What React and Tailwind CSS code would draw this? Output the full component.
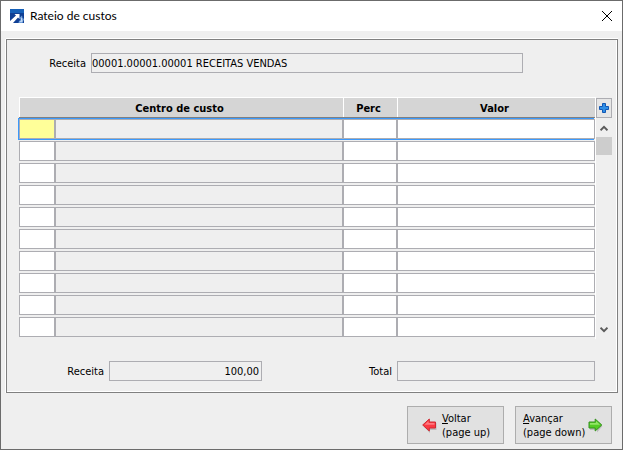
import { useState } from 'react';

const emptyRows = Array.from({ length: 10 }, () => ({ codigo: '', centro: '', perc: '', valor: '' }));

function AppIcon() {
  return (
    <svg width="14" height="14" viewBox="0 0 14 14" aria-hidden="true">
      <rect width="14" height="14" fill="#0f3f94" />
      <rect width="14" height="4" fill="#1560b8" />
      <path d="M0 14V12L6 6.500L4.500 5H9.500V10L8 8.500L3 14Z" fill="#fff" />
      <path d="M8.500 14L9 12L10.500 11L10 8.500L12 6.500L12.500 9L14 10L12.500 14Z" fill="#6f9fdb" />
      <path d="M9.500 13L11 11.500L11 9.500L12 8.500V11L13 12L11.500 13Z" fill="#c4daf5" />
    </svg>
  );
}

function ArrowLeft() {
  return (
    <svg width="15" height="15" viewBox="0 0 15 15" className="shrink-0" aria-hidden="true">
      <path d="M2 9L8 15V12H14.500V5Z" fill="#999" opacity=".5" />
      <path d="M.7 7L7.300 1V4H13.500V10H7.300V13Z" fill="#fb3a44" stroke="#cf2a32" strokeLinejoin="round" />
      <path d="M2.500 6.700L6.500 3V5H12.500V6.700Z" fill="#ff7a80" />
    </svg>
  );
}

function ArrowRight() {
  return (
    <svg width="15" height="15" viewBox="0 0 15 15" className="shrink-0" aria-hidden="true">
      <path d="M14.500 8L9 14.500V12H2V5Z" fill="#999" opacity=".5" />
      <path d="M13.800 7L7.200 1V4H1V10H7.200V13Z" fill="#55cc26" stroke="#338f1c" strokeLinejoin="round" />
      <path d="M12 6.700L8 3V5H2V6.700Z" fill="#93e568" />
    </svg>
  );
}

function ScrollColumn() {
  return (
    <div className="flex w-4 flex-col pt-[3px]">
      <button type="button" aria-label="Adicionar" className="flex h-5 items-center justify-center border border-[#adadb2] bg-[#e6e6e6]">
        <svg width="10" height="10" viewBox="0 0 10 10" aria-hidden="true">
          <path d="M3.500 .5h3v3h3v3h-3v3h-3v-3h-3v-3h3z" fill="#2f8fe6" stroke="#1257b4" />
        </svg>
      </button>
      <button type="button" aria-label="Rolar para cima" className="flex h-[19px] items-center justify-center">
        <svg width="8" height="6" viewBox="0 0 8 6" fill="none" stroke="#5a5a5a" strokeWidth="2" aria-hidden="true">
          <path d="M.5 5.300L4 1.800L7.500 5.300" />
        </svg>
      </button>
      <div className="h-[18px] bg-[#cdcdcd]" />
      <div className="flex-1" />
      <button type="button" aria-label="Rolar para baixo" className="flex h-[18px] items-center justify-center">
        <svg width="8" height="6" viewBox="0 0 8 6" fill="none" stroke="#5a5a5a" strokeWidth="2" aria-hidden="true">
          <path d="M.5 .7L4 4.200L7.500 .7" />
        </svg>
      </button>
    </div>
  );
}

function CellInput({ label, className, ...props }) {
  return (
    <input
      aria-label={label}
      className={`block h-5 w-full border border-[#adadb2] px-0.5 outline-none ${className}`}
      {...props}
    />
  );
}

export default function App() {
  const [rows, setRows] = useState(emptyRows);
  const [active, setActive] = useState(0);

  const update = (index, field) => (e) => {
    const { value } = e.target;
    setRows((prev) => prev.map((row, i) => (i === index ? { ...row, [field]: value } : row)));
  };

  return (
    <div className="flex min-h-screen flex-col border border-[#6b6b6b] bg-[#efefef] font-['DejaVu_Sans_Condensed','DejaVu_Sans',sans-serif] text-[11px] leading-[14px] text-black">
      <header className="flex h-[30px] items-center bg-white pr-[10px] pl-[9px]">
        <AppIcon />
        <h1 className="ml-[6px] flex-1 font-[Lato,sans-serif] text-[12px] leading-4">Rateio de custos</h1>
        <button type="button" aria-label="Fechar">
          <svg width="10" height="10" viewBox="0 0 10 10" stroke="#000" aria-hidden="true">
            <path d="M0 0L10 10M10 0L0 10" />
          </svg>
        </button>
      </header>

      <main className="mt-2 mr-1 ml-[5px] border border-[#808080] pt-[13px] pr-[5px] pb-[11px] pl-3 shadow-[0_-1px_0_#fff,-1px_0_0_#fff,inset_-1px_-1px_0_#fff]">
        <div className="flex items-center gap-[5px] pr-[89px]">
          <label htmlFor="receita" className="w-[67px] pt-[2px] text-right">Receita</label>
          <input
            id="receita"
            readOnly
            value="00001.00001.00001 RECEITAS VENDAS"
            className="h-5 min-w-0 flex-1 border border-[#adadb2] bg-[#efefef] outline-none"
          />
        </div>

        <div className="mt-[22px] flex">
          <table className="w-full flex-1 table-fixed border-separate border-spacing-x-0 border-spacing-y-[2px]">
            <colgroup>
              <col className="w-9" />
              <col />
              <col className="w-[54px]" />
              <col className="w-[198px]" />
            </colgroup>
            <thead>
              <tr className="bg-[#d5d5d5] shadow-[0_1px_0_#808080]">
                <th colSpan={2} className="h-5 border-t border-l border-white pt-[2px] pr-1 pb-0 pl-0">Centro de custo</th>
                <th className="border-t border-l border-white pt-[2px] pr-1 pb-0 pl-0">Perc</th>
                <th className="border-t border-l border-white pt-[2px] pr-1 pb-0 pl-0">Valor</th>
              </tr>
            </thead>
            <tbody>
              {rows.map((row, i) => (
                <tr
                  key={i}
                  onFocus={() => setActive(i)}
                  className={i === active ? 'shadow-[-1px_-1px_0_#3b99fc,-1px_1px_0_#3b99fc]' : ''}
                >
                  <td className="p-0">
                    <CellInput label="Código" value={row.codigo} onChange={update(i, 'codigo')} className={i === active ? 'bg-[#ffff99]' : 'bg-white'} />
                  </td>
                  <td className="p-0">
                    <CellInput label="Centro de custo" value={row.centro} readOnly className="bg-[#efefef]" />
                  </td>
                  <td className="p-0">
                    <CellInput label="Perc" value={row.perc} onChange={update(i, 'perc')} className="bg-white text-right" />
                  </td>
                  <td className="p-0">
                    <CellInput label="Valor" value={row.valor} onChange={update(i, 'valor')} className="bg-white text-right" />
                  </td>
                </tr>
              ))}
            </tbody>
          </table>
          <div className="mt-[2px] w-px bg-white" />
          <ScrollColumn />
        </div>

        <div className="mt-[22px] flex items-center justify-between pr-[17px]">
          <div className="flex items-center gap-[5px]">
            <label htmlFor="valor-receita" className="w-[85px] pt-[2px] text-right">Receita</label>
            <input id="valor-receita" readOnly value="100,00" className="h-5 w-[153px] border border-[#adadb2] bg-[#efefef] px-0.5 text-right outline-none" />
          </div>
          <div className="flex items-center gap-[5px]">
            <label htmlFor="total" className="pt-[2px]">Total</label>
            <input id="total" readOnly value="" className="h-5 w-[198px] border border-[#adadb2] bg-[#efefef] px-0.5 text-right outline-none" />
          </div>
        </div>
      </main>

      <footer className="mt-[13px] flex justify-end gap-[11px] pr-[10px] pb-[5px]">
        <button type="button" className="flex h-[38px] w-[97px] items-center gap-[5px] border border-[#adadad] bg-[#e1e1e1] pl-[14px] text-left">
          <ArrowLeft />
          <span className="pt-[2px]"><u>V</u>oltar<br />(page up)</span>
        </button>
        <button type="button" className="flex h-[38px] w-[97px] items-center gap-[3px] border border-[#adadad] bg-[#e1e1e1] pl-[7px] text-left whitespace-nowrap">
          <span className="pt-[2px]"><u>A</u>vançar<br />(page down)</span>
          <ArrowRight />
        </button>
      </footer>
    </div>
  );
}
